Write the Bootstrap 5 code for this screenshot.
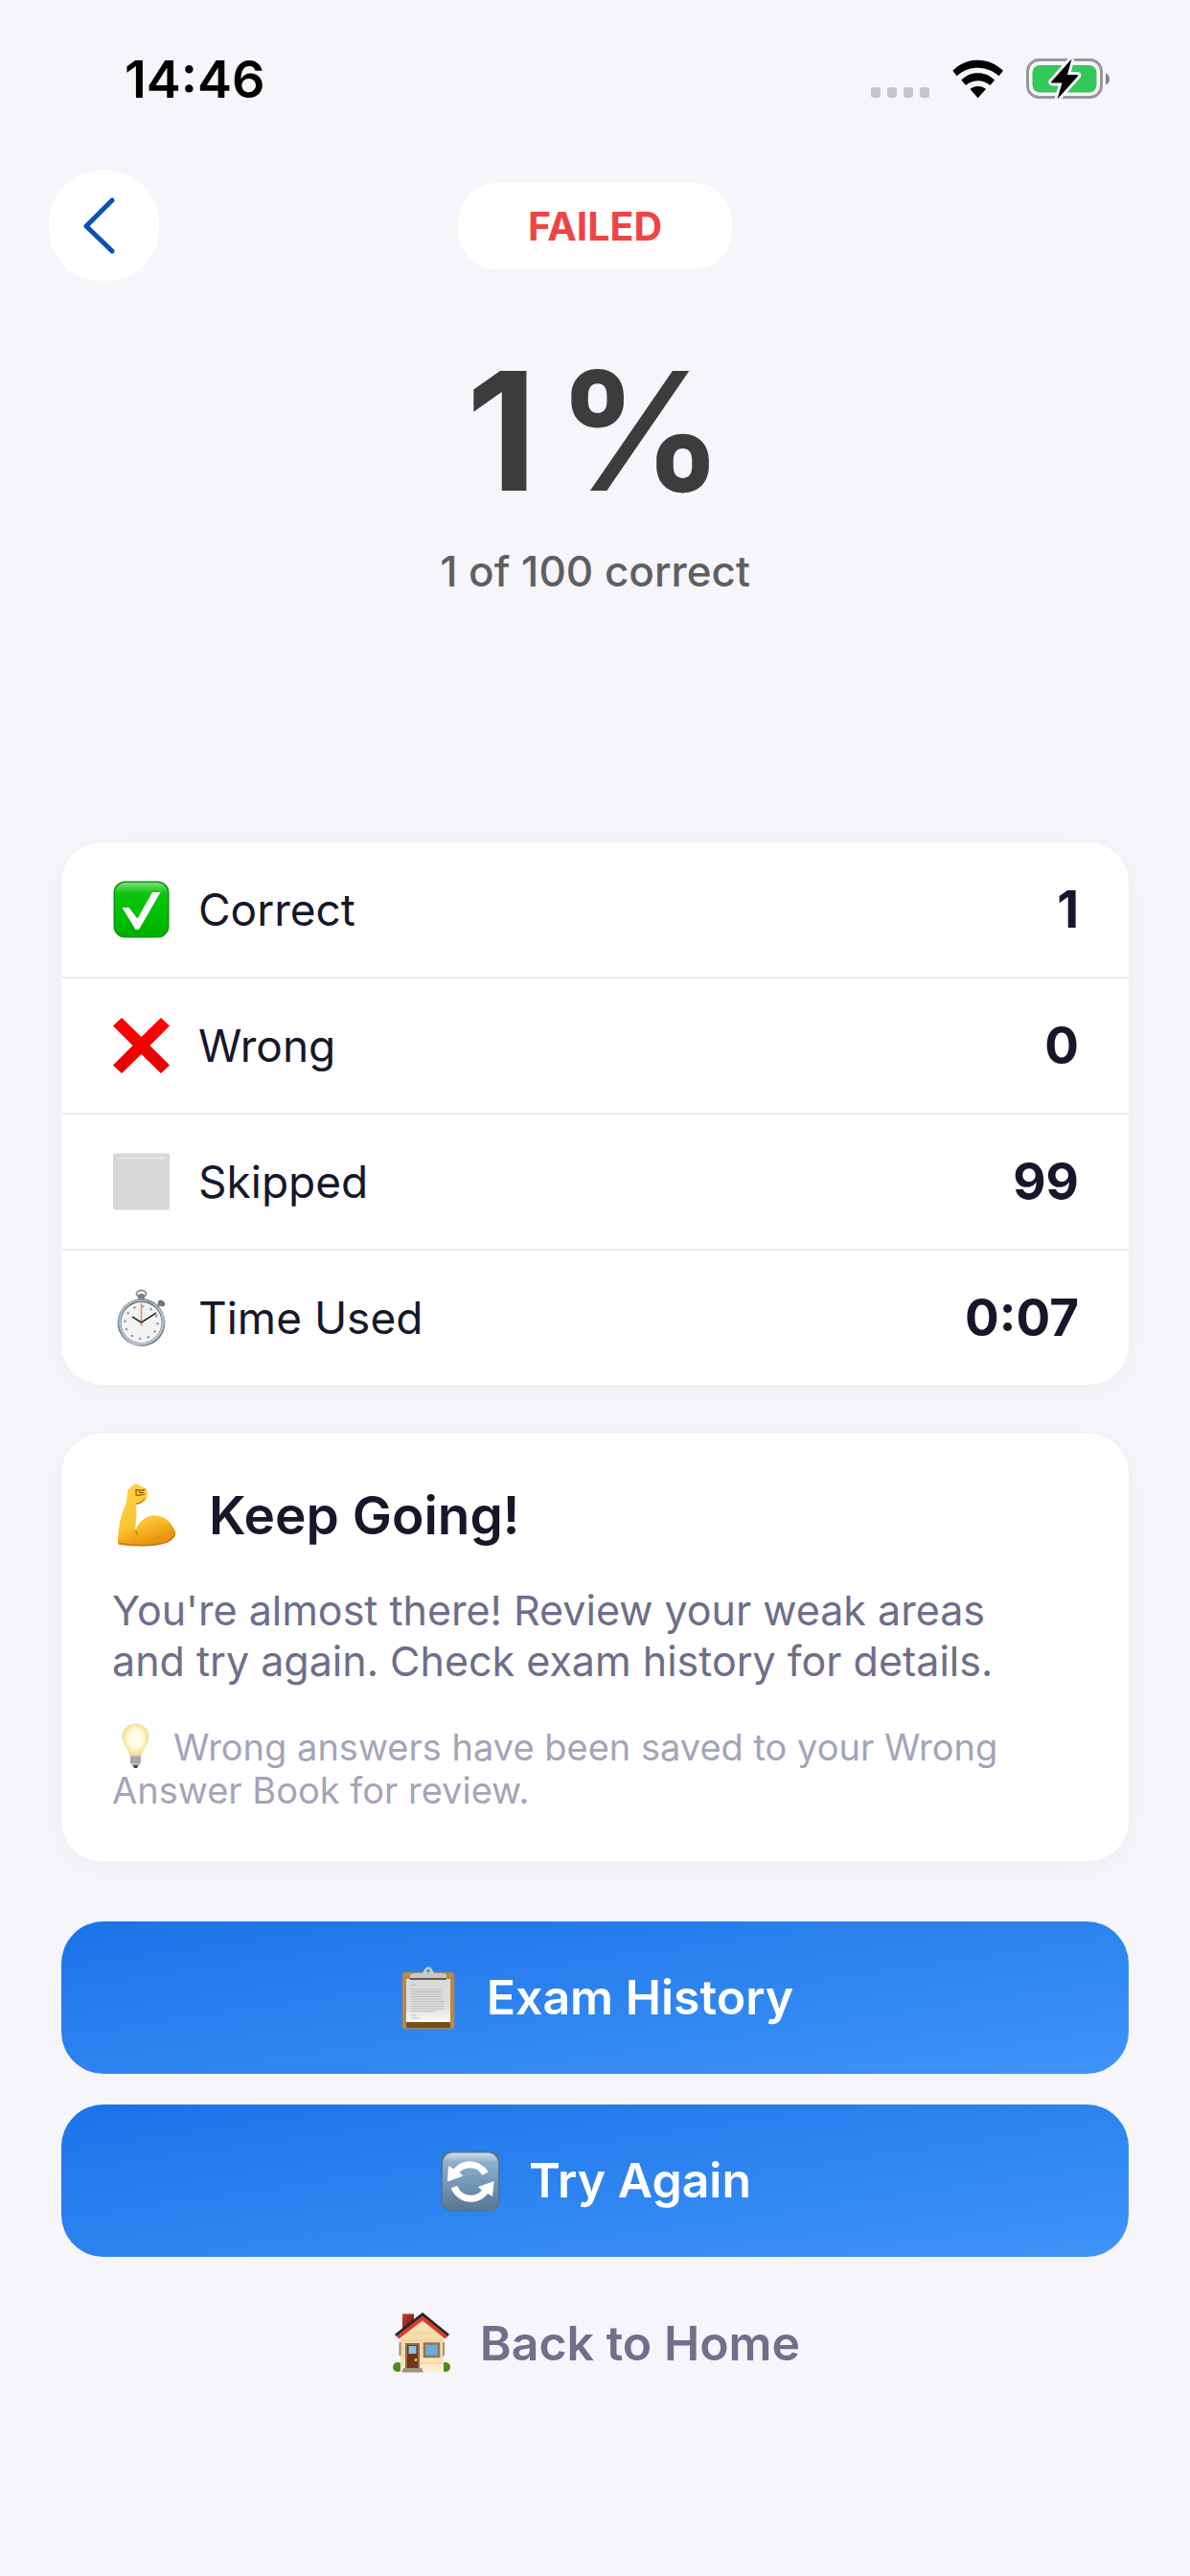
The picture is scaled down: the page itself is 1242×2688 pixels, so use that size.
<!DOCTYPE html>
<html lang="en">
<head>
<meta charset="utf-8">
<meta name="viewport" content="width=device-width, initial-scale=1">
<title>Exam Result</title>
<link href="https://cdn.jsdelivr.net/npm/bootstrap@5.3.0/dist/css/bootstrap.min.css" rel="stylesheet">
<style>
  body { background: #f5f5fa; color: #17172b; font-family: Inter, "Liberation Sans", sans-serif; }
  svg { display: block; flex: none; }
  .status-bar { height: 166px; padding: 0 84px 0 130px; color: #000; }
  .status-time { font-size: 54px; font-weight: 600; line-height: 60px; }
  .top-bar { display: grid; grid-template-columns: 1fr auto 1fr; padding: 12px 51px 0; }
  .back-btn { width: 115px; height: 115px; background: #fff; border-radius: 54px; }
  .result-pill { height: 90px; padding: 0 73px; border-radius: 40px; background: #fff; color: #ef4444; font-size: 41px; font-weight: 700; line-height: 90px; }
  .score { margin-top: 66px; font-size: 172px; font-weight: 700; line-height: 180px; color: #3c3c3c; gap: 20px; }
  .score-sub { margin-top: 30px; font-size: 44px; font-weight: 500; line-height: 54px; color: #5f5f62; }
  .page-body { padding: 256px 64px 0; }
  .panel { background: #fff; border-radius: 42px; box-shadow: 0 6px 36px rgba(20, 20, 50, .04); }
  .stat-row { min-height: 140px; padding: 0 52px 0 54px; box-sizing: content-box; }
  .stat-row + .stat-row { border-top: 2px solid #e8e8f1; }
  .stat-name { margin-left: 30px; font-size: 46px; line-height: 56px; }
  .stat-value { font-size: 53px; font-weight: 700; line-height: 60px; }
  .advice { margin-top: 51px; padding: 50px 53px 51px; }
  .advice-title { font-size: 55px; font-weight: 600; line-height: 70px; margin: 0 0 0 35px; }
  .advice-text { font-size: 43px; line-height: 53px; color: #6e6e8b; margin: 38px 0 0; }
  .advice-note { font-size: 38px; line-height: 45px; color: #a4a4b9; margin: 41px 0 0; }
  .advice-note svg { display: inline-block; vertical-align: 1px; margin: -10px 16px -10px 0; }
  .actions { margin-top: 63px; gap: 32px; }
  .action-btn { height: 159px; border-radius: 44px; border: 0; color: #fff; font-size: 50px; font-weight: 600; background: linear-gradient(to bottom right, #1a73e8, #4094f7); }
  .home-link { font-size: 50px; font-weight: 600; line-height: 60px; color: #70708c; text-decoration: none; margin-top: 25px; }
</style>
</head>
<body>
<header>
  <div class="status-bar d-flex align-items-center justify-content-between">
    <span class="status-time">14:46</span>
    <div class="d-flex align-items-center">
      <svg width="249" height="44" viewBox="0 0 249 44" role="img" aria-label="No signal, Wi-Fi, battery charging">
        <g fill="#c4c4c9"><rect y="30" width="10" height="11" rx="3"/><rect x="17" y="30" width="10" height="11" rx="3"/><rect x="34" y="30" width="10" height="11" rx="3"/><rect x="51" y="30" width="10" height="11" rx="3"/></g>
        <g><path d="M85.300 12.800C100-2 123-2 138 12.800L133.500 18.200C120.500 6.800 102.500 6.800 89.600 18.200Z"/><path d="M94.300 22.500C104 12.700 119.500 12.700 129.200 22.500L124.400 28C117 21.700 106.400 21.700 99 28Z"/><path d="M103.500 32C108 28 115.500 28 120 32L111.700 41.200Z"/></g>
        <rect x="163.500" y="1.500" width="77" height="39" rx="12" fill="none" stroke="#98989b" stroke-width="3"/>
        <path d="M245 15.500Q249 17 249 21.500T245 27.500Z" fill="#858588"/>
        <rect x="168.500" y="7" width="67" height="28.500" rx="8" fill="#34c759"/>
        <path d="M209.500 .5L188.500 24Q187.500 25.500 189.500 25.500H199.500L194.500 42.500L216 18.500Q217 17 215 17H205Z" stroke="#f5f5fa" stroke-width="6" paint-order="stroke"/>
      </svg>
    </div>
  </div>
  <div class="top-bar align-items-center">
    <button class="back-btn btn p-0 d-flex align-items-center justify-content-center" type="button" aria-label="Back">
      <svg width="50" height="64" viewBox="0 0 50 64"><path d="M33 5L6 32L33 58" fill="none" stroke="#0a50b8" stroke-width="5" stroke-linecap="round" stroke-linejoin="round"/></svg>
    </button>
    <div class="result-pill">FAILED</div>
  </div>
  <div class="text-center">
    <div class="score d-flex justify-content-center"><span>1</span><span>%</span></div>
    <div class="score-sub">1 of 100 correct</div>
  </div>
</header>
<main class="page-body">
  <section class="panel">
    <div class="stat-row d-flex align-items-center">
      <svg width="59" height="60" viewBox="0 0 59 60"><defs><linearGradient id="gr" x2="0" y2="1"><stop stop-color="#7ddd7d"/><stop offset=".2" stop-color="#0cc40f"/><stop offset=".6" stop-color="#00c000"/><stop offset="1" stop-color="#00ad00"/></linearGradient></defs><rect x=".5" y=".5" width="58" height="59" rx="12" fill="#079609"/><rect x="2" y="2" width="55" height="56.500" rx="11" fill="url(#gr)"/><path d="M9.500 28H16.500L25.500 39.500L41 12H49.500L27 51H23.500Z" fill="#fff"/></svg>
      <span class="stat-name">Correct</span><span class="stat-value ms-auto">1</span>
    </div>
    <div class="stat-row d-flex align-items-center">
      <svg width="59" height="60" viewBox="0 0 59 60"><defs><linearGradient id="rd" x2="0" y2="1"><stop stop-color="#ff0505"/><stop offset="1" stop-color="#e20000"/></linearGradient></defs><path d="M9 1L29.500 21L50 1L59 9.500L38.500 30L59 50.500L50 59L29.500 39L9 59L0 50.500L20.500 30L0 9.500Z" fill="url(#rd)"/></svg>
      <span class="stat-name">Wrong</span><span class="stat-value ms-auto">0</span>
    </div>
    <div class="stat-row d-flex align-items-center">
      <svg width="59" height="60" viewBox="0 0 59 60"><rect y=".5" width="59" height="59" rx="2" fill="#d8d8d8"/><rect x="4" y="4.500" width="51" height="2" rx="1" fill="#e6e6e6"/></svg>
      <span class="stat-name">Skipped</span><span class="stat-value ms-auto">99</span>
    </div>
    <div class="stat-row d-flex align-items-center">
      <svg width="59" height="60" viewBox="0 0 59 60"><defs><linearGradient id="st" x2="1" y2="1"><stop stop-color="#d5dbe2"/><stop offset=".35" stop-color="#6f7a86"/><stop offset=".65" stop-color="#aebdd0"/><stop offset="1" stop-color="#3d4148"/></linearGradient></defs>
        <ellipse cx="29.500" cy="5" rx="5" ry="3.600" fill="none" stroke="#8b959f" stroke-width="2"/><rect x="26" y="5" width="7" height="7" rx="2" fill="#78818b"/>
        <path d="M46 19L50 14" stroke="#7c858e" stroke-width="3"/><ellipse cx="50.500" cy="15" rx="4" ry="3" fill="#6e7883" transform="rotate(35 50.500 15)"/>
        <circle cx="29.500" cy="35" r="25" fill="url(#st)"/><circle cx="29.500" cy="35" r="23.300" fill="#b9cbe0"/><circle cx="29.500" cy="34.500" r="21.800" fill="#60564f"/><circle cx="29.500" cy="35" r="21.200" fill="#f3f3f3"/>
        <circle cx="29.500" cy="35" r="17" fill="none" stroke="#9a9a9a" stroke-width="2.200" stroke-dasharray="2.400 6.500"/>
        <circle cx="29.500" cy="27" r="4" fill="none" stroke="#c9c9c9" stroke-width="1" stroke-dasharray="1 2"/>
        <path d="M29.500 15V39" stroke="#f0907c" stroke-width="1.600"/><path d="M20 29L29.500 35L45 25" fill="none" stroke="#333" stroke-width="1.600"/></svg>
      <span class="stat-name">Time Used</span><span class="stat-value ms-auto">0:07</span>
    </div>
  </section>

  <section class="panel advice">
    <div class="d-flex align-items-center">
      <svg width="66" height="66" viewBox="0 0 66 66"><defs><linearGradient id="ar" x2=".3" y2="1"><stop stop-color="#ffd24a"/><stop offset=".7" stop-color="#fdc22f"/><stop offset="1" stop-color="#e8960f"/></linearGradient></defs>
        <path d="M16 7L22 1.500Q25 0 29 2L35 5Q38 9 36 13Q38 16 33 18Q29 22 25 22Q26 34 24 49Q31 34 43 33.500Q58 33 65.500 49Q68 57 57 62Q39 68 8 64Q5.500 64 6 58Q7 38 13 25Q16 19 16 7Z" fill="url(#ar)"/>
        <path d="M24 49Q27 51 26 54" fill="none" stroke="#cf850f" stroke-width="1.500"/><path d="M7 62.500Q39 67 57 61Q66 57 65.500 50" fill="none" stroke="#c97a12" stroke-width="1.500"/><path d="M24.500 6Q28 8 34 6.500M25 6V12Q30 13 34 11M28 8Q29 11 33 9" fill="none" stroke="#9b5a0a" stroke-width="1.300"/><path d="M25 21Q30 21 34 16" fill="none" stroke="#c98314" stroke-width="1.300"/></svg>
      <h2 class="advice-title">Keep Going!</h2>
    </div>
    <p class="advice-text">You're almost there! Review your weak areas<br>and try again. Check exam history for details.</p>
    <p class="advice-note"><svg width="48" height="48" viewBox="0 0 48 48"><defs><radialGradient id="bu" cy=".45"><stop stop-color="#fffef4"/><stop offset=".55" stop-color="#fffbdc"/><stop offset="1" stop-color="#f3dd8f"/></radialGradient></defs><path d="M24.500 1C33 1 38 7 38 14C38 22 31.500 26 30 35H19C17.500 26 11 22 11 14C11 7 16 1 24.500 1Z" fill="url(#bu)" stroke="#eedda0" stroke-width=".8"/><path d="M19 34H30V42L27 45H22L19 42Z" fill="#b5b5b0"/><path d="M19 37H30M19 40H30" stroke="#8e8e89" stroke-width="1"/><path d="M21.500 44H27.500L26 47H23Z" fill="#454545"/></svg>Wrong answers have been saved to your Wrong<br>Answer Book for review.</p>
  </section>

  <div class="actions d-flex flex-column">
    <button type="button" class="action-btn btn d-flex align-items-center justify-content-center">
      <svg width="66" height="66" viewBox="0 0 66 66"><defs><linearGradient id="pp" x2="0" y2="1"><stop stop-color="#d9d9d9"/><stop offset=".7" stop-color="#e0e0e0"/><stop offset="1" stop-color="#fff"/></linearGradient></defs><rect x="6" y="6" width="54" height="59" rx="3" fill="#b98a48" stroke="#8e8579" stroke-width="1"/><rect x="10" y="58" width="46" height="6" fill="#76501f"/><rect x="10" y="13" width="46" height="45" fill="url(#pp)"/><path d="M14 14V9Q15 7 20 7H26Q28 6 29 3Q31 0 33 0T37 3Q38 6 40 7H46Q51 7 52 9V14Z" fill="#c6c8cc"/><circle cx="33" cy="4.500" r="1.500" fill="#2b7ce6"/><rect x="14" y="12" width="38" height="2" fill="#6b5b55"/><g stroke="#bdbdbd" stroke-width="1.200"><path d="M15 19H21M15 24H46M15 26.500H48M15 29H47M15 31.500H49M15 34H47M15 36.500H50M15 39H49M15 41.500H49M15 44H49M15 46.500H40M15 51H21M15 54H25"/></g></svg>
      <span class="ms-4 ps-1">Exam History</span>
    </button>
    <button type="button" class="action-btn btn d-flex align-items-center justify-content-center">
      <svg width="66" height="66" viewBox="0 0 66 66"><defs><linearGradient id="rf" x2="0" y2="1"><stop stop-color="#cfe0ee"/><stop offset=".16" stop-color="#8fb0cc"/><stop offset=".5" stop-color="#7599b8"/><stop offset="1" stop-color="#577691"/></linearGradient></defs><rect x="2" y="1.500" width="62" height="63" rx="12" fill="#547592"/><rect x="4" y="3.500" width="58" height="60" rx="11" fill="url(#rf)"/><g fill="none" stroke="#fff" stroke-width="7"><path d="M15.500 27A18.500 18.500 0 0 1 48.500 25"/><path d="M50.500 40A18.500 18.500 0 0 1 16 39"/></g><g fill="#fff"><path d="M10 17L9 33.500L25.500 27.500L21 23.500Z"/><path d="M56 49L57.500 33L41 39L46 43.500L53 47Z"/></g></svg>
      <span class="ms-4 ps-1">Try Again</span>
    </button>
    <a href="#" class="home-link d-flex align-items-center justify-content-center">
      <svg width="66" height="66" viewBox="0 0 66 66"><defs><linearGradient id="wl" x2="0" y2="1"><stop stop-color="#fbe3b4"/><stop offset=".6" stop-color="#f3d9a8"/><stop offset="1" stop-color="#fff0cc"/></linearGradient><linearGradient id="ch" x2="1" y2="1"><stop stop-color="#c8402f"/><stop offset="1" stop-color="#5e1410"/></linearGradient></defs><rect x="13" y="2.500" width="12" height="18" fill="url(#ch)"/><circle cx="8" cy="58" r="5" fill="#4d8b22"/><circle cx="58" cy="58" r="5" fill="#4d8b22"/><path d="M11 23L34 7L56 23V63H11Z" fill="url(#wl)"/><path d="M11.500 38H55M11.500 30H55M11.500 46H55M11.500 54H55M17 22H51" stroke="#e2c48f" stroke-width=".7"/><path d="M6 25L34 3L61 25" fill="none" stroke="#24262b" stroke-width="3"/><path d="M8 27L34 7L59 27" fill="none" stroke="#d9392c" stroke-width="4"/><path d="M16 33H31V60H16Z" fill="#936b4b"/><path d="M18 35H29V59H18Z" fill="#74351f"/><path d="M19.500 36H27.500V44H19.500Z" fill="#86c2ec"/><circle cx="27" cy="50.500" r="1.500" fill="#f5bc3b"/><rect x="36" y="33.500" width="15" height="13.500" fill="#6fa9d8" stroke="#8e7557" stroke-width="2.500"/><path d="M10.500 32V46M56 32V46" stroke="#8e7557" stroke-width="1.500"/><path d="M14 59H33L35 63.500H12Z" fill="#9a9382"/></svg>
      <span class="ms-4 ps-1">Back to Home</span>
    </a>
  </div>
</main>
<script src="https://cdn.jsdelivr.net/npm/bootstrap@5.3.0/dist/js/bootstrap.bundle.min.js"></script>
</body>
</html>
